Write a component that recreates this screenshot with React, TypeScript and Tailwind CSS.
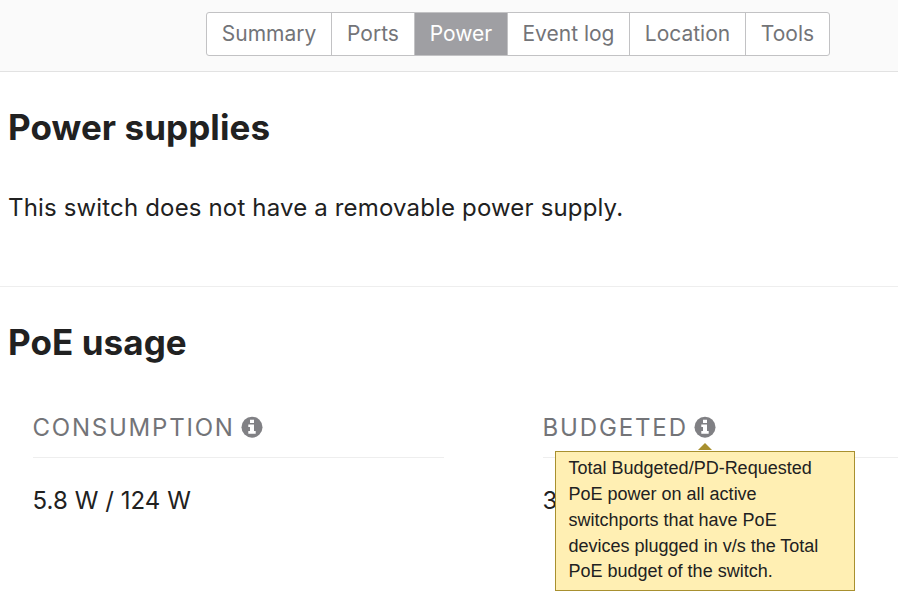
import React from "react";

const tabs = [
  { label: "Summary", width: "w-[124px]" },
  { label: "Ports", width: "w-[83px]" },
  { label: "Power", width: "w-[93px]", active: true },
  { label: "Event log", width: "w-[122px]" },
  { label: "Location", width: "w-[116px]" },
  { label: "Tools", width: "w-[84px]" },
];

function InfoIcon() {
  return (
    <svg viewBox="0 0 22 22" className="block h-[22px] w-[22px]">
      <circle cx="11" cy="11.2" r="10.5" fill="#808084" />
      <path d="M9 3.8h4v3.2H9zM7.3 8.4h5.7v6.7h1.7v2.7H7.3v-2.7h1.7v-4H7.3z" fill="#fff" />
    </svg>
  );
}

export default function App() {
  return (
    <div className="h-[599px] w-[898px] overflow-hidden bg-white font-['Inter',sans-serif] text-[#212121]">
      <header className="flex h-[72px] items-start border-b border-[#e2e2e2] bg-[#fafafa] pt-3 pl-[206px]">
        <nav className="flex h-11 overflow-hidden rounded-[3px] border border-[#c2c2c4] bg-white text-[21px] text-[#737478]">
          {tabs.map((t, i) => (
            <div
              key={t.label}
              className={`${t.width} flex items-center justify-center whitespace-nowrap ${i ? "border-l border-[#c2c2c4]" : ""} ${t.active ? "bg-[#9f9fa3] text-white" : ""}`}
            >
              {t.label}
            </div>
          ))}
        </nav>
      </header>
      <section className="h-[215px] border-b border-[#eeeeee] pt-[33px] pl-2">
        <h1 className="text-[35px] leading-[44px] font-bold tracking-[0.08px] whitespace-nowrap">Power supplies</h1>
        <p className="mt-[43px] text-[24px] leading-[32px] tracking-[0.16px] whitespace-nowrap">This switch does not have a removable power supply.</p>
      </section>
      <section className="pt-[33px]">
        <h1 className="pl-2 text-[35px] leading-[44px] font-bold tracking-[0.08px]">PoE usage</h1>
        <div className="mt-[48px] flex gap-[99px] pl-[33px]">
          <div className="w-[411px]">
            <div className="flex h-[46px] gap-[6.8px] border-b border-[#eeeeee] text-[24px] leading-[32px] tracking-[1.78px] text-[#737478]">
              <span className="-ml-[0.5px]">CONSUMPTION</span>
              <span className="pt-[4px]"><InfoIcon /></span>
            </div>
            <p className="mt-[27px] -ml-[0.5px] text-[24px] leading-[32px] tracking-[0.06px]">5.8 W / 124 W</p>
          </div>
          <div className="w-[355px] shrink-0">
            <div className="flex h-[46px] gap-[6.2px] border-b border-[#eeeeee] text-[24px] leading-[32px] tracking-[1.86px] text-[#737478]">
              <span className="-ml-[0.5px]">BUDGETED</span>
              <span className="relative pt-[4px]">
                <InfoIcon />
                <span className="absolute top-[31px] left-[4px] border-x-[7px] border-b-[7px] border-x-transparent border-b-[#a8902f]" />
                <div className="absolute top-[39px] -left-[139px] h-[140px] w-[300px] border border-[#a8902f] bg-[#ffefb3] pt-[4.2px] pl-[12.5px] font-['Liberation_Sans',Arial,sans-serif] text-[18px] leading-[25.8px] tracking-normal whitespace-nowrap text-[#212121]">
                  <div>Total Budgeted/PD-Requested</div>
                  <div>PoE power on all active</div>
                  <div>switchports that have PoE</div>
                  <div>devices plugged in v/s the Total</div>
                  <div>PoE budget of the switch.</div>
                </div>
              </span>
            </div>
            <p className="mt-[27px] -ml-[0.5px] text-[24px] leading-[32px]">3</p>
          </div>
        </div>
      </section>
    </div>
  );
}
